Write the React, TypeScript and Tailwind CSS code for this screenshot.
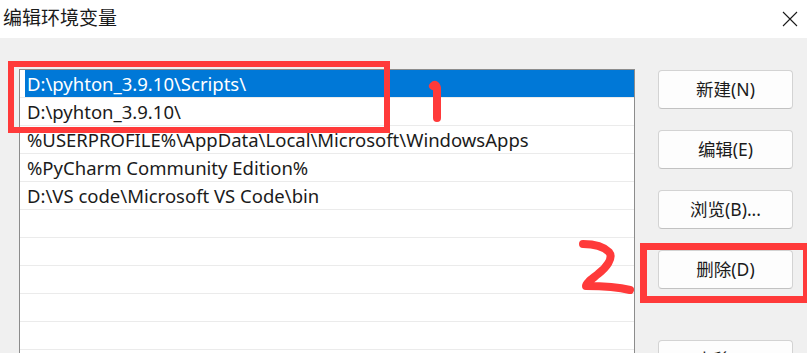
import React from 'react';

const rows = [
  'D:\\pyhton_3.9.10\\Scripts\\',
  'D:\\pyhton_3.9.10\\',
  '%USERPROFILE%\\AppData\\Local\\Microsoft\\WindowsApps',
  '%PyCharm Community Edition%',
  'D:\\VS code\\Microsoft VS Code\\bin',
  '',
  '',
  '',
  '',
  '',
];

const buttons = ['新建(N)', '编辑(E)', '浏览(B)...', '删除(D)'];

const fontStack = { fontFamily: '"Noto Sans", "Noto Sans CJK SC", sans-serif' };

const WinButton: React.FC<{ label: string; className?: string }> = ({ label, className = '' }) => (
  <button
    className={`h-[39px] w-[135px] rounded-[4px] border border-[#d3d3d3] border-b-[#c2c2c2] bg-[#fdfdfd] text-[17.5px] text-[#1b1b1b] flex items-center justify-center ${className}`}
  >
    {label}
  </button>
);

export default function App() {
  return (
    <div className="relative w-[807px] h-[353px] overflow-hidden bg-[#f0f0f0]" style={fontStack}>
      {/* Title bar */}
      <div className="h-[38px] bg-white flex items-center justify-between pl-[3px] pr-[8px]">
        <span className="text-[19px] text-[#1a1a1a] -mt-[2px]">编辑环境变量</span>
        <svg width="16" height="16" viewBox="0 0 16 16" className="mr-[1px] -mt-[1px]">
          <path d="M1 1 L15 15 M15 1 L1 15" stroke="#1a1a1a" strokeWidth="1.1" />
        </svg>
      </div>

      {/* Body */}
      <div className="flex pt-[31px] pl-[19px]">
        <div className="w-[616px] h-[400px] border border-[#8c8c8c] bg-white">
          {rows.map((r, i) => (
            <div key={i} className="h-[28px] flex border-b border-[#ebebeb]">
              <div
                className={`flex-1 ml-[5px] pl-[2px] flex items-center text-[18.5px] whitespace-nowrap ${
                  i === 0 ? 'bg-[#0078d7] text-white' : 'text-[#1b1b1b]'
                }`}
              >
                {r}
              </div>
            </div>
          ))}
        </div>

        <div className="ml-[23px] pt-[1px] flex flex-col gap-[21px]">
          {buttons.map((b) => (
            <WinButton key={b} label={b} />
          ))}
          <WinButton label="上移(U)" className="mt-[30px]" />
        </div>
      </div>

      {/* Red annotations */}
      <div className="absolute left-[8px] top-[61px] w-[382px] h-[72px] border-[6px] border-[#ff3a3a]" />
      <div className="absolute left-[640px] top-[243px] w-[170px] h-[60px] border-[7px] border-[#ff3a3a]" />
      <svg className="absolute left-0 top-0" width="807" height="353">
        <path d="M433 86 Q436 83 437 88 L437 118" stroke="#ff3a3a" strokeWidth="8" fill="none" strokeLinecap="round" strokeLinejoin="round" />
        <path d="M583 244 C592 244 603 246 609 252 C614 258 606 268 598 274 C592 279 586 283 586 286 C600 286 618 287 630 290" stroke="#ff3a3a" strokeWidth="8" fill="none" strokeLinecap="round" strokeLinejoin="round" />
      </svg>
    </div>
  );
}
